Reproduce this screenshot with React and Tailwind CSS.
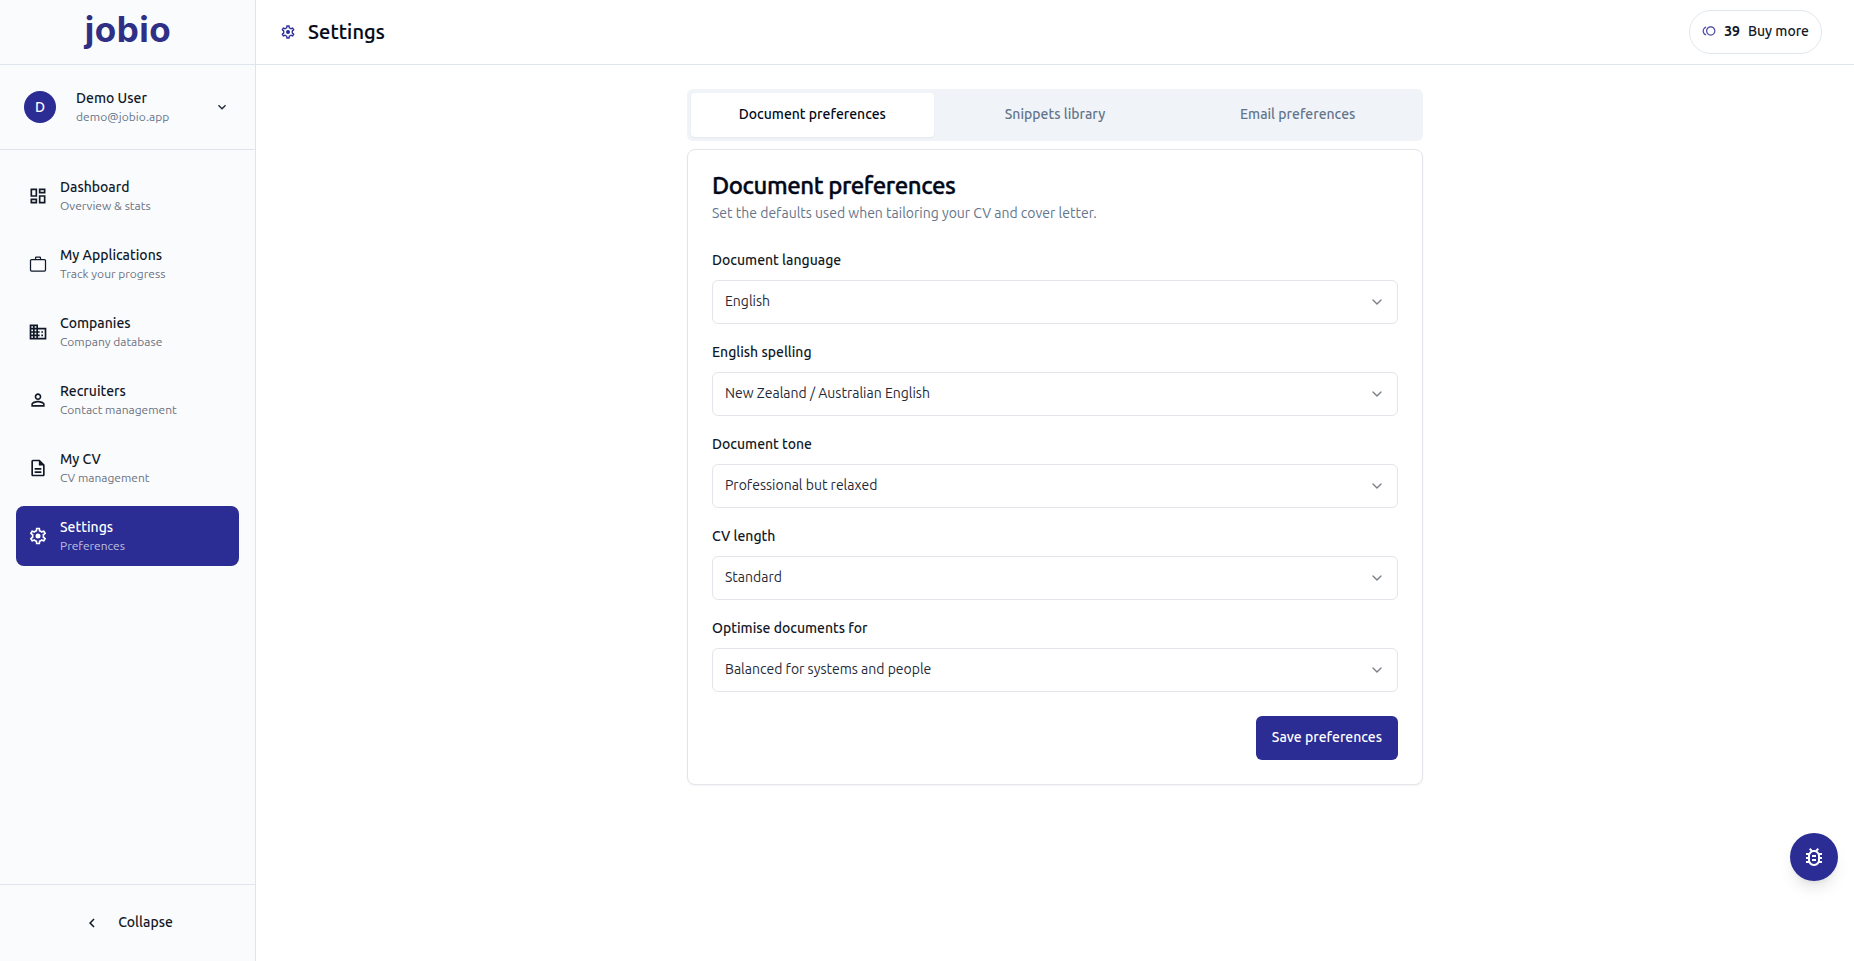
import {
  MdOutlineDashboard,
  MdOutlineDomain,
  MdPersonOutline,
  MdOutlineDescription,
  MdOutlineBugReport,
  MdOutlineToll,
  MdExpandMore,
  MdChevronLeft,
} from "react-icons/md";
import { ChevronDown } from "lucide-react";

function BriefcaseIcon({ className }) {
  return (
    <svg viewBox="0 0 24 24" fill="none" stroke="currentColor" strokeWidth="1.5" className={className}>
      <rect x="3" y="6.6" width="18" height="13.8" rx="1.3" />
      <path d="M9 6.6V4.7a1 1 0 0 1 1-1h4a1 1 0 0 1 1 1v1.9" />
    </svg>
  );
}

function GearIcon({ className }) {
  return (
    <svg viewBox="0 0 24 24" fill="currentColor" className={className}>
      <path d="M19.43 12.98c.04-.32.07-.64.07-.98 0-.34-.03-.66-.07-.98l2.11-1.65c.19-.15.24-.42.12-.64l-2-3.46a.5.5 0 0 0-.61-.22l-2.49 1c-.52-.4-1.08-.73-1.69-.98l-.38-2.65A.488.488 0 0 0 14 2h-4c-.25 0-.46.18-.49.42l-.38 2.65c-.61.25-1.17.59-1.69.98l-2.49-1a.566.566 0 0 0-.18-.03c-.17 0-.34.09-.43.25l-2 3.46c-.13.22-.07.49.12.64l2.11 1.65c-.04.32-.07.65-.07.98 0 .33.03.66.07.98l-2.11 1.65c-.19.15-.24.42-.12.64l2 3.46a.5.5 0 0 0 .61.22l2.49-1c.52.4 1.08.73 1.69.98l.38 2.65c.03.24.24.42.49.42h4c.25 0 .46-.18.49-.42l.38-2.65c.61-.25 1.17-.59 1.69-.98l2.49 1c.06.02.12.03.18.03.17 0 .34-.09.43-.25l2-3.46c.12-.22.07-.49-.12-.64l-2.11-1.65zm-1.98-1.71c.04.31.05.52.05.73 0 .21-.02.43-.05.73l-.14 1.13.89.7 1.08.84-.7 1.21-1.27-.51-1.04-.42-.9.68c-.43.32-.84.56-1.25.73l-1.06.43-.16 1.13-.2 1.35h-1.4l-.19-1.35-.16-1.13-1.06-.43c-.43-.18-.83-.41-1.23-.71l-.91-.7-1.06.43-1.27.51-.7-1.21 1.08-.84.89-.7-.14-1.13c-.03-.31-.05-.54-.05-.74s.02-.43.05-.73l.14-1.13-.89-.7-1.08-.84.7-1.21 1.27.51 1.04.42.9-.68c.43-.32.84-.56 1.25-.73l1.06-.43.16-1.13.2-1.35h1.39l.19 1.35.16 1.13 1.06.43c.43.18.83.41 1.23.71l.91.7 1.06-.43 1.27-.51.7 1.21-1.07.85-.89.7.14 1.13z" />
      <circle cx="12" cy="12" r="3" />
    </svg>
  );
}

const navItems = [
  { title: "Dashboard", hint: "Overview & stats", Icon: MdOutlineDashboard },
  { title: "My Applications", hint: "Track your progress", Icon: BriefcaseIcon },
  { title: "Companies", hint: "Company database", Icon: MdOutlineDomain },
  { title: "Recruiters", hint: "Contact management", Icon: MdPersonOutline },
  { title: "My CV", hint: "CV management", Icon: MdOutlineDescription },
  { title: "Settings", hint: "Preferences", Icon: GearIcon, active: true },
];

const tabs = ["Document preferences", "Snippets library", "Email preferences"];

const fields = [
  { label: "Document language", value: "English" },
  { label: "English spelling", value: "New Zealand / Australian English" },
  { label: "Document tone", value: "Professional but relaxed" },
  { label: "CV length", value: "Standard" },
  { label: "Optimise documents for", value: "Balanced for systems and people" },
];

function NavItem({ title, hint, Icon, active }) {
  return (
    <a
      className={
        active
          ? "flex h-[60px] items-center gap-3 rounded-lg bg-[#2b2c94] px-3 text-white"
          : "flex h-[60px] items-center gap-3 rounded-lg px-3 text-[#111827]"
      }
    >
      <Icon className="size-5 shrink-0" />
      <span className="flex flex-col pb-px">
        <span className="text-sm leading-5 font-medium">{title}</span>
        <span className={active ? "mt-px text-xs leading-4 text-white/70" : "mt-px text-xs leading-4 text-[#6b7280]"}>
          {hint}
        </span>
      </span>
    </a>
  );
}

function Sidebar() {
  return (
    <aside className="flex w-64 shrink-0 flex-col border-r border-[#dfe5ec] bg-[#fafbfd]">
      <div className="flex h-[65px] items-center justify-center border-b border-[#dfe5ec] pb-1.5 pl-px">
        <span className="font-['Inter',sans-serif] text-[35px] leading-none font-bold tracking-[0.5px] text-[#2f2f86]">
          jobio
        </span>
      </div>
      <div className="flex h-[85px] items-center border-b border-[#dfe5ec] pr-[25px] pl-6">
        <span className="flex size-8 items-center justify-center rounded-full bg-[#2b2c94] pb-px text-sm font-medium text-white">
          D
        </span>
        <span className="ml-5 flex flex-1 flex-col pb-px">
          <span className="text-sm leading-5 font-medium text-[#111827]">Demo User</span>
          <span className="mt-px text-xs leading-4 tracking-[0.07px] text-[#64748b]">demo@jobio.app</span>
        </span>
        <MdExpandMore className="size-4 text-[#1f2937]" />
      </div>
      <nav className="flex flex-1 flex-col gap-2 p-4">
        {navItems.map((item) => (
          <NavItem key={item.title} {...item} />
        ))}
      </nav>
      <div className="border-t border-[#dfe5ec] p-4">
        <button className="flex h-11 w-full items-center justify-center gap-[17px] pl-px text-sm font-medium text-[#111827]">
          <MdChevronLeft className="size-[18px]" />
          <span className="pb-0.5">Collapse</span>
        </button>
      </div>
    </aside>
  );
}

function Header() {
  return (
    <header className="flex h-[65px] items-center justify-between border-b border-[#dfe5ec] pr-8 pl-6">
      <div className="flex items-center gap-3">
        <GearIcon className="size-4 text-[#2b2c94]" />
        <h1 className="text-xl font-medium tracking-[0.15px] text-[#020817] [-webkit-text-stroke:0.2px_#020817]">
          Settings
        </h1>
      </div>
      <button className="flex h-11 items-center gap-2 rounded-full border border-[#e2e8f0] px-3 pb-0.5 text-sm text-[#111827]">
        <MdOutlineToll className="size-3.5 text-[#2b2c94]/85" />
        <span className="font-bold">39</span>
        <span className="font-medium">Buy more</span>
      </button>
    </header>
  );
}

function SelectField({ label, value }) {
  return (
    <div className="flex flex-col gap-2">
      <label className="text-sm leading-6 font-medium text-[#111827]">{label}</label>
      <button className="flex h-11 items-center justify-between rounded-md border border-[#e2e5ea] bg-white px-3 text-sm text-[#1f2937]">
        <span className="pb-0.5">{value}</span>
        <ChevronDown className="size-4 opacity-60" />
      </button>
    </div>
  );
}

export default function App() {
  return (
    <div className="flex h-screen overflow-hidden bg-white font-['Ubuntu','Noto_Sans',sans-serif]">
      <Sidebar />
      <div className="flex min-w-0 flex-1 flex-col">
        <Header />
        <main className="mx-auto flex w-[736px] flex-col gap-2 pt-6">
          <div className="grid h-[52px] grid-cols-3 rounded-md bg-[#f0f4f8] p-1">
            {tabs.map((tab, i) => (
              <button
                key={tab}
                className={
                  i === 0
                    ? "rounded-sm bg-white pb-0.5 text-sm font-medium text-[#020817] shadow-xs"
                    : "rounded-sm pb-0.5 text-sm font-medium text-[#64748b]"
                }
              >
                {tab}
              </button>
            ))}
          </div>
          <section className="rounded-lg border border-[#e2e5ea] bg-white p-6 shadow-xs">
            <h2 className="text-2xl leading-none font-medium tracking-[-0.44px] text-[#020817] [-webkit-text-stroke:0.4px_#020817]">
              Document preferences
            </h2>
            <p className="mt-[5px] text-sm leading-5 text-[#64748b]">
              Set the defaults used when tailoring your CV and cover letter.
            </p>
            <div className="mt-[25px] flex flex-col gap-4">
              {fields.map((field) => (
                <SelectField key={field.label} {...field} />
              ))}
            </div>
            <div className="mt-6 flex justify-end">
              <button className="h-11 rounded-md bg-[#2b2c94] px-4 pb-0.5 text-sm font-medium text-white">
                Save preferences
              </button>
            </div>
          </section>
        </main>
      </div>
      <button className="absolute right-4 bottom-20 flex size-12 items-center justify-center rounded-full bg-[#2b2c94] text-white shadow-lg">
        <MdOutlineBugReport className="size-6" />
      </button>
    </div>
  );
}
